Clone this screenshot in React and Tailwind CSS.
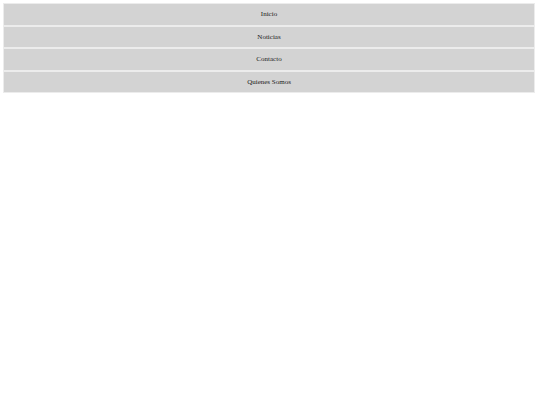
const items = ['Inicio', 'Noticias', 'Contacto', 'Quienes Somos']

export default function App() {
  return (
    <div className="min-h-[405px] bg-white pt-[3px] pl-[3px] pr-[5px] font-['Liberation_Serif',serif] text-[#222]">
      <ul className="flex flex-col">
        {items.map((item) => (
          <li
            key={item}
            className="flex h-[22.5px] items-center justify-center border border-[#ececec] bg-[#d3d3d3] text-[7px]"
          >
            {item}
          </li>
        ))}
      </ul>
    </div>
  )
}
